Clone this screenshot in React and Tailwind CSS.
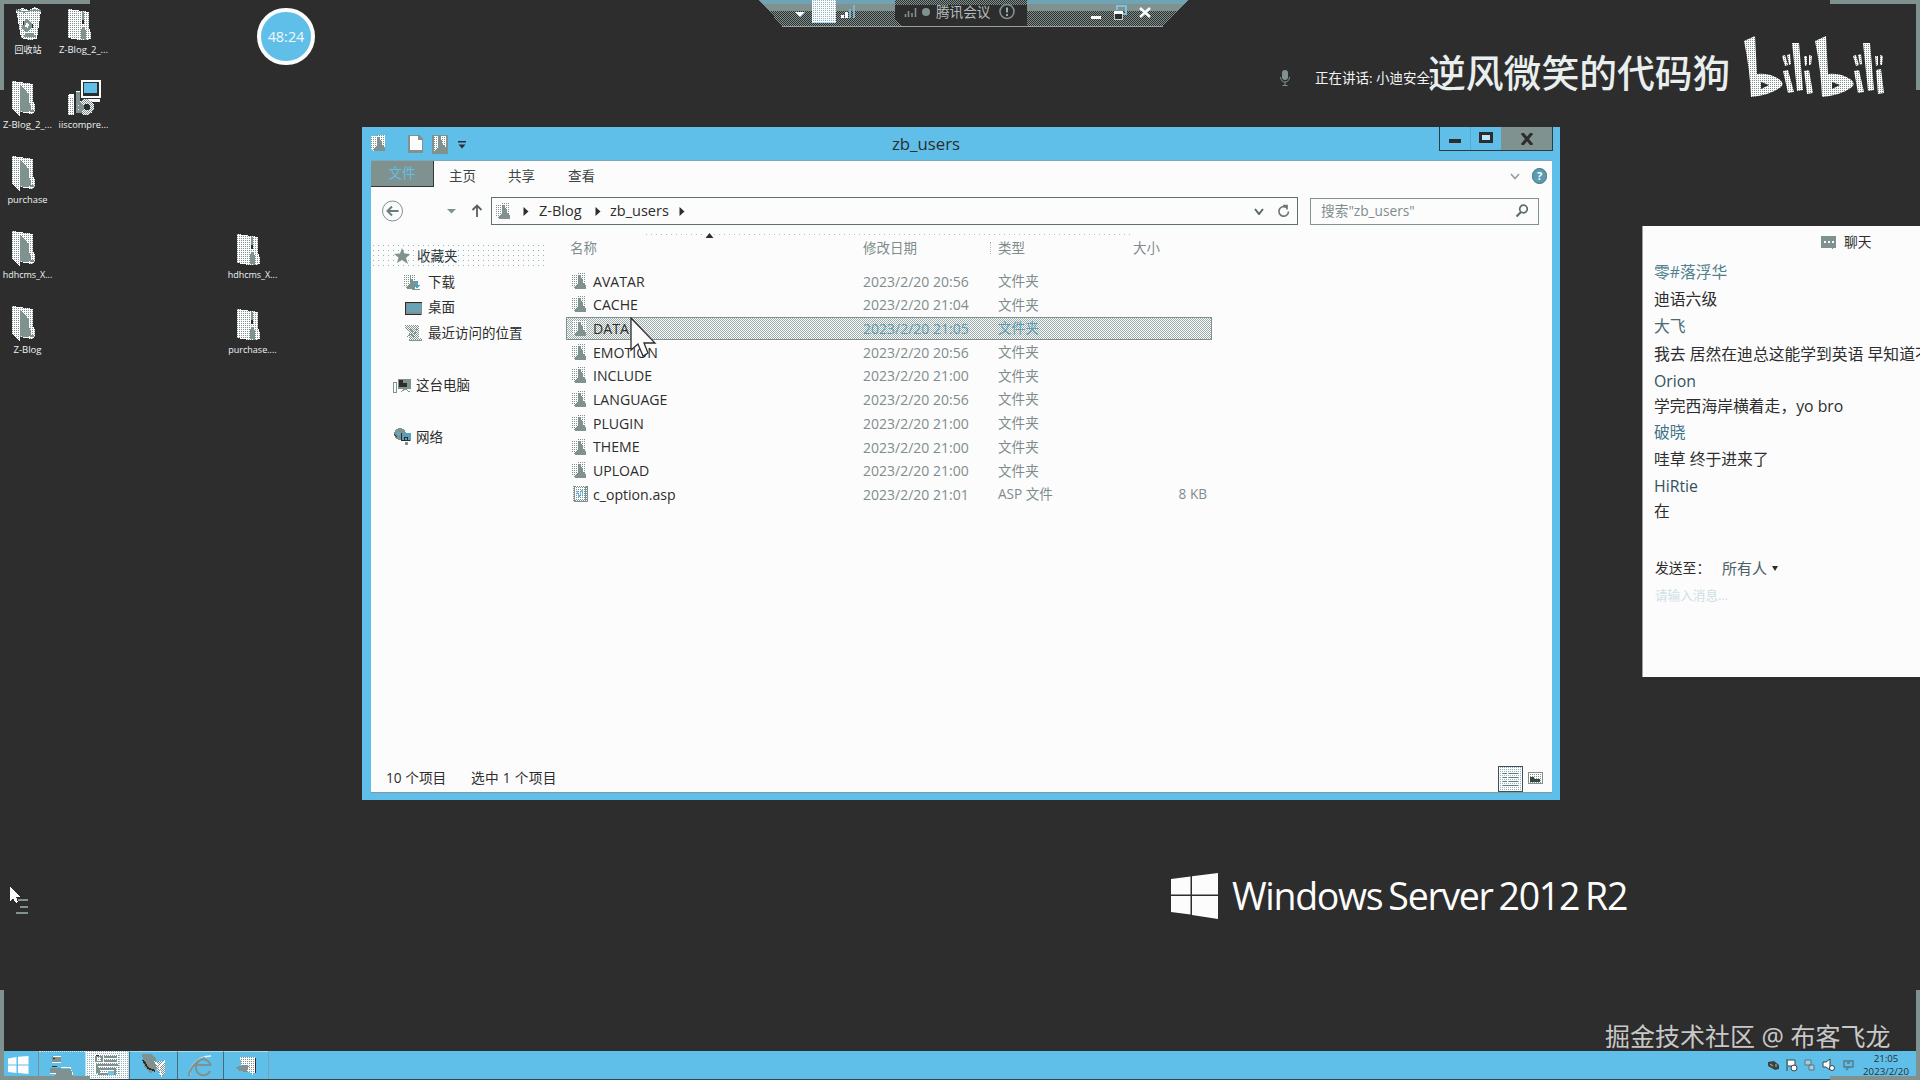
import React from "react";

const checker =
  "bg-[conic-gradient(#9aaba9_25%,#fcfcfc_0_50%,#9aaba9_0_75%,#fcfcfc_0)] bg-[length:2px_2px]";
const lightMesh =
  "bg-[conic-gradient(#8fb4be_25%,#fcfcfc_0)] bg-[length:2px_2px]";

function Defs() {
  return (
    <svg width="0" height="0" className="absolute" aria-hidden="true">
      <defs>
        <pattern id="mesh" width="2" height="2" patternUnits="userSpaceOnUse">
          <rect width="2" height="2" fill="#fcfcfc" />
          <rect width="1" height="1" fill="#7f9290" />
        </pattern>
        <pattern id="half" width="2" height="2" patternUnits="userSpaceOnUse">
          <rect width="2" height="2" fill="#fcfcfc" />
          <rect width="1" height="1" fill="#7f9290" />
          <rect x="1" y="1" width="1" height="1" fill="#7f9290" />
        </pattern>
        <pattern id="dusk" width="2" height="2" patternUnits="userSpaceOnUse">
          <rect width="2" height="2" fill="#2d2d2d" />
          <rect width="1" height="1" fill="#7f9290" />
          <rect x="1" y="1" width="1" height="1" fill="#7f9290" />
        </pattern>
      </defs>
    </svg>
  );
}

function BigFolder() {
  return (
    <svg width="24" height="35" viewBox="0 0 24 35" shapeRendering="crispEdges">
      <path d="M0 0L21 3V20L23 24V31L20 33L8 31V35L0 28Z" fill="url(#mesh)" />
      <path d="M8 4L13 8L17 14V21L19 26V30L14 31L8 30Z" fill="#7f9290" />
      <path d="M18 29h4v2h-4z" fill="#7f9290" />
    </svg>
  );
}

function ZipFolder() {
  return (
    <svg width="24" height="32" viewBox="0 0 24 32" shapeRendering="crispEdges">
      <path d="M0 0L14 2L21 3V18L23 24V30L19 31L12 31L0 29Z" fill="url(#mesh)" />
      <path d="M14 3H16V12H14ZM13 21L16 17L18 22V31L13 30Z" fill="#7f9290" />
      <path d="M14 11H16V15H14Z" fill="#2d2d2d" />
      <path d="M17.500 4V17" stroke="#fff" />
    </svg>
  );
}

function RecycleBin() {
  return (
    <svg width="27" height="34" viewBox="0 0 27 34" shapeRendering="crispEdges">
      <path d="M1 3L7 1L14 3L20 0L26 3L22 32L14 33L6 31Z" fill="url(#mesh)" />
      <path d="M1 3L9 5L19 3L26 4" stroke="#7f9290" strokeWidth="1.5" fill="none" />
      <path d="M8 15l4-3 5 4v5l-5 4-5-3zM10 26h8l3 4H9z" fill="#7f9290" />
      <path d="M11 16l3 1-1 4-3-1z" fill="#fcfcfc" />
      <path d="M8 14v4M17 17v4" stroke="#2d2d2d" />
    </svg>
  );
}

function Installer() {
  return (
    <svg width="34" height="36" viewBox="0 0 34 36" shapeRendering="crispEdges">
      <rect x="14" y="1" width="18" height="16" fill="#2d2d2d" stroke="#fcfcfc" strokeWidth="1.5" />
      <rect x="16" y="3" width="13" height="10" fill="#5fbfe9" />
      <path d="M20 19H32V22H24Z" fill="#fcfcfc" />
      <path d="M0 15H6V35H0Z" fill="url(#mesh)" />
      <path d="M8 12H12V33H8Z" fill="#7f9290" />
      <path d="M1 14H6M8 11H12M1 16H6" stroke="#fcfcfc" />
      <circle cx="18" cy="27" r="8" fill="url(#half)" />
      <path d="M12 21L17 27L13 34L10 28Z" fill="#7f9290" />
      <circle cx="19" cy="27" r="3.2" fill="#2d2d2d" />
    </svg>
  );
}

function SmallFolder() {
  return (
    <svg className="shrink-0" width="16" height="17" viewBox="0 0 16 17" shapeRendering="crispEdges">
      <path d="M0 1H5L7 0H14V16H2L0 14Z" fill="url(#mesh)" />
      <path d="M7 2H9V5L11 7V10L14 12V16H3V13L6 10V5Z" fill="#7f9290" />
    </svg>
  );
}

function AspFile() {
  return (
    <svg className="shrink-0" width="17" height="18" viewBox="0 0 17 18" shapeRendering="crispEdges">
      <path d="M1 1H13L16 3V17H1Z" fill="url(#half)" />
      <path d="M3 3H12V15H3Z" fill="url(#mesh)" />
      <path d="M5 6l2 6 3-7 1 5" stroke="#5fbfe9" fill="none" />
      <path d="M2.500 1V16.500H15.500V2L13.500 1.500V15" stroke="#7f9290" fill="none" />
    </svg>
  );
}

const desktopItems = [
  { kind: "bin", label: "回收站", icon: "left-[15px] top-[7px]", text: "left-0 top-[42px] w-[56px] text-[9px]" },
  { kind: "zip", label: "Z-Blog_2_...", icon: "left-[68px] top-[9px]", text: "left-[53px] top-[42px] w-[61px] text-[9.500px]" },
  { kind: "folder", label: "Z-Blog_2_...", icon: "left-[12px] top-[81px]", text: "left-[-3px] top-[117px] w-[61px] text-[9.500px]" },
  { kind: "installer", label: "iiscompre...", icon: "left-[68px] top-[80px]", text: "left-[53px] top-[117px] w-[61px] text-[9.300px]" },
  { kind: "folder", label: "purchase", icon: "left-[12px] top-[156px]", text: "left-[-3px] top-[192px] w-[61px] text-[9.300px]" },
  { kind: "folder", label: "hdhcms_X...", icon: "left-[12px] top-[231px]", text: "left-[-3px] top-[267px] w-[61px] text-[9px]" },
  { kind: "folder", label: "Z-Blog", icon: "left-[12px] top-[306px]", text: "left-[-3px] top-[342px] w-[61px] text-[9.600px]" },
  { kind: "zip", label: "hdhcms_X...", icon: "left-[237px] top-[234px]", text: "left-[222px] top-[267px] w-[61px] text-[9px]" },
  { kind: "zip", label: "purchase....", icon: "left-[237px] top-[309px]", text: "left-[222px] top-[342px] w-[61px] text-[9px]" },
];

const kinds = { bin: RecycleBin, zip: ZipFolder, folder: BigFolder, installer: Installer };

function DesktopItem({ kind, label, icon, text }) {
  const Icon = kinds[kind];
  return (
    <div>
      <div className={`absolute ${icon}`}><Icon /></div>
      <div className={`absolute ${text} flex h-4 items-center justify-center whitespace-nowrap text-[#eef3f3]`}>{label}</div>
    </div>
  );
}

function ConnectionBar() {
  return (
    <div className="absolute left-[759px] top-0 h-[27px] w-[429px]">
      <svg className="absolute inset-0" width="429" height="27" shapeRendering="crispEdges">
        <path d="M0 0H429L404 26H23Z" fill="url(#dusk)" />
        <path d="M0 0H429L419 11H11Z" fill="#7f9290" />
        <path d="M0 0H429L425 4H4Z" fill="#70a4b4" />
        <path d="M136 0H268V26H143L136 20Z" fill="#2d2d2d" />
        <path d="M136 0H268V5H136Z" fill="url(#dusk)" />
        <path d="M23 26.500H404" stroke="#9aa09a" />
      </svg>
      <div className="relative flex h-6 items-center">
        <svg className="ml-9 shrink-0" width="10" height="24"><path d="M0 12H10L5 17Z" fill="#fcfcfc" /></svg>
        <div className={`ml-[7px] h-[23px] w-6 shrink-0 self-start border-b border-[#9fdcf5] ${lightMesh}`} />
        <svg className="ml-[5px] shrink-0" width="15" height="24" shapeRendering="crispEdges">
          <path d="M0 15h3v3H0zM4 12h3v6H4z" fill="#fcfcfc" />
          <path d="M8 9h2v9H8zM12 5h2v13h-2z" fill="#7fb4c4" />
        </svg>
        <svg className="ml-[48px] shrink-0" width="26" height="24">
          <path d="M1.500 14v3M4.500 11v6M8 13v4M11.500 8v9" stroke="#7f9290" strokeWidth="1.6" />
          <circle cx="22" cy="12" r="4" fill="#7f9290" />
        </svg>
        <span className="ml-[6px] whitespace-nowrap text-[13.6px] text-[#b4bebe]">腾讯会议</span>
        <svg className="ml-[8px] shrink-0" width="18" height="24">
          <circle cx="9" cy="11.500" r="7" fill="none" stroke="#7f9290" strokeWidth="1.6" />
          <path d="M9 7.500v5M9 14v2" stroke="#a9b4b4" strokeWidth="1.8" />
        </svg>
        <svg className="ml-[74px] shrink-0" width="61" height="24" shapeRendering="crispEdges">
          <path d="M1 16h10v3H1z" fill="#fcfcfc" />
          <path d="M27 10V6H36V14H33" fill="none" stroke="#7fc0da" strokeWidth="1.5" />
          <rect x="24.500" y="11.500" width="8" height="8" fill="#2d2d2d" stroke="#c7d0d0" />
          <path d="M24 11h9v3h-9z" fill="#fcfcfc" />
          <path d="M50 8L60 17M60 8L50 17" stroke="#fcfcfc" strokeWidth="2.6" shapeRendering="auto" />
        </svg>
      </div>
    </div>
  );
}

function BiliLogo() {
  return (
    <svg className="absolute left-[1744px] top-[36px]" width="142" height="62" viewBox="0 0 142 62" fill="url(#mesh)">
      <path fillRule="evenodd" d="M0 5L11 0L13 38Q26 37 35 43Q41 47 37 51Q27 59 7 61Q6 34 0 5ZM17 46V53L25 49Z" />
      <path d="M39 35L44 34L50 56L44 57ZM38 20L41 19L44 29L41 30ZM43 19L46 18L47 28L45 29Z" />
      <path d="M48 7L55 7L59 54L53 55Z" />
      <path d="M60 35L65 34L69 57L63 58ZM60 20L63 20L63 29L61 30ZM65 19L68 20L67 29L65 29Z" />
      <path fillRule="evenodd" d="M71 5L82 0L84 38Q97 37 106 43Q112 47 108 51Q98 59 78 61Q77 34 71 5ZM88 46V53L96 49Z" />
      <path d="M110 35L115 34L120 56L114 57ZM109 20L112 19L115 29L112 30ZM114 19L117 18L118 28L116 29Z" />
      <path d="M119 7L126 7L130 54L124 55Z" />
      <path d="M132 34L137 33L140 57L134 58ZM131 20L134 20L134 29L132 30ZM136 19L139 20L138 29L136 29Z" />
    </svg>
  );
}

const files = [
  ["AVATAR", "2023/2/20 20:56", "文件夹"],
  ["CACHE", "2023/2/20 21:04", "文件夹"],
  ["DATA", "2023/2/20 21:05", "文件夹"],
  ["EMOTION", "2023/2/20 20:56", "文件夹"],
  ["INCLUDE", "2023/2/20 21:00", "文件夹"],
  ["LANGUAGE", "2023/2/20 20:56", "文件夹"],
  ["PLUGIN", "2023/2/20 21:00", "文件夹"],
  ["THEME", "2023/2/20 21:00", "文件夹"],
  ["UPLOAD", "2023/2/20 21:00", "文件夹"],
  ["c_option.asp", "2023/2/20 21:01", "ASP 文件", "8 KB"],
];

function FileRow({ file, selected }) {
  const [name, date, type, size] = file;
  return (
    <div
      className={`flex h-[23.7px] w-[646px] items-center whitespace-nowrap border pl-[5px] text-[13.6px] ${
        selected ? `border-[#7f9290] ${checker}` : "border-transparent"
      }`}
    >
      {size ? <AspFile /> : <SmallFolder />}
      <span className={`${size ? "ml-[4px]" : "ml-[5px]"} w-[270px] text-[14.1px] text-[#2d2d2d]`}>{name}</span>
      <span className={`w-[135px] text-[14px] ${selected ? "text-[#5c9db4]" : "text-[#7f8c8c]"}`}>{date}</span>
      <span className={`flex-1 ${selected ? "text-[#5c9db4]" : "text-[#7f8c8c]"}`}>{type}</span>
      <span className="pr-[4px] text-[#7f8c8c]">{size}</span>
    </div>
  );
}

function Sidebar() {
  return (
    <div className="flex w-[176px] shrink-0 flex-col pt-3 text-[13.5px] text-[#2d2d2d]">
      <div className="flex h-[26px] items-center bg-[radial-gradient(#8fb4bc_0.6px,transparent_0.7px)] bg-[length:5px_5px] pl-[23px]">
        <svg width="17" height="16" viewBox="0 0 17 16"><path d="M8 0L10.500 5.500L16 6L12 10L14 16L8 12L3 15L4.500 9.500L0 6L6 5.500Z" fill="#7f9290" /></svg>
        <span className="ml-[6px] text-[#2d3a3a]">收藏夹</span>
      </div>
      <div className="flex h-[26px] items-center pl-[33px]">
        <svg width="18" height="18" viewBox="0 0 18 18" shapeRendering="crispEdges">
          <path d="M0 1H12V16H2L0 14Z" fill="url(#mesh)" />
          <path d="M6 2L8 7L11 9V16H3V13L6 11Z" fill="#7f9290" />
          <path d="M11 8h3v4h2l-3 4-4-4h2z" fill="#5a9fba" /><path d="M8 16h8v1H8z" fill="#7f9290" />
        </svg>
        <span className="ml-[6px]">下载</span>
      </div>
      <div className="flex h-[25px] items-center pl-[34px]">
        <svg width="18" height="16" viewBox="0 0 18 16" shapeRendering="crispEdges">
          <path d="M0 2H17V15H0Z" fill="#7f9290" /><path d="M2 4H16V12H2Z" fill="#6ba3b6" />
          <path d="M0 2H17M0.500 2V15M0 14H16" stroke="#2d2d2d" />
        </svg>
        <span className="ml-[5px]">桌面</span>
      </div>
      <div className="flex h-[27px] items-center pl-[34px]">
        <svg width="18" height="17" viewBox="0 0 18 17" shapeRendering="crispEdges">
          <path d="M0 0H14V13H17V16H4V8L0 3Z" fill="url(#half)" />
          <path d="M2 12L6 9L8 12L12 4M4 15.500H17M3 3l5 4" stroke="#7f9290" fill="none" />
        </svg>
        <span className="ml-[5px] whitespace-nowrap">最近访问的位置</span>
      </div>
      <div className="mt-[25px] flex h-[26px] items-center pl-[22px]">
        <svg width="19" height="17" viewBox="0 0 19 17" shapeRendering="crispEdges">
          <path d="M5 2H18V12H5Z" fill="#7f9290" /><path d="M6 3H10V6H14V10H6Z" fill="#2d2d2d" />
          <path d="M0.500 5V15.500H3.500V5Z" fill="#fcfcfc" stroke="#7f9290" /><path d="M8 15l4-3 5 3" stroke="#7f9290" fill="none" />
        </svg>
        <span className="ml-[4px]">这台电脑</span>
      </div>
      <div className="mt-[26px] flex h-[26px] items-center pl-[22px]">
        <svg width="19" height="18" viewBox="0 0 19 18" shapeRendering="crispEdges">
          <circle cx="7" cy="6" r="6" fill="#7f9290" /><path d="M3 2l5 3-3 4z" fill="#62a9c5" />
          <path d="M8 5H18V13H8Z" fill="#5a9fba" /><path d="M1 6l3 3M8 5V12H17M11 9h3v3h-3z" stroke="#2d2d2d" fill="none" />
          <path d="M12 14h3v3h-3z" fill="#7f9290" />
        </svg>
        <span className="ml-[4px]">网络</span>
      </div>
    </div>
  );
}

function Explorer() {
  return (
    <div className="absolute left-[362px] top-[127px] flex h-[673px] w-[1198px] flex-col bg-[#5fbfe9] pb-[7px] pl-[9px] pr-[8px]">
      <div className="flex h-[33px] shrink-0 text-[#2d2d2d]">
        <div className="flex w-[110px] items-center">
          <SmallFolder />
          <svg className="ml-[21px] mt-[2px]" width="16" height="19" shapeRendering="crispEdges">
            <path d="M0 0H11L15 4V18H0Z" fill="#7f9290" /><path d="M2 1H10V5H14V15H2Z" fill="#fcfcfc" />
          </svg>
          <svg className="ml-[8px] mt-[2px]" width="16" height="19" shapeRendering="crispEdges">
            <path d="M0 0H16V19H0Z" fill="#7f9290" /><path d="M2 1H6V12L2 16ZM9 1H14V13L10 8Z" fill="url(#mesh)" />
          </svg>
          <svg className="ml-[10px] mt-[2px]" width="8" height="8"><path d="M0 0h8v1.500H0zM0.500 3.500h7L4 7.500z" fill="#2d2d2d" /></svg>
        </div>
        <div className="flex w-[890px] items-center justify-center text-[16.800px]">zb_users</div>
        <div className="ml-auto mr-[-1px] flex h-[24px] border border-t-0 border-[#2d3a40]">
          <div className="flex w-[31px] items-center justify-center border-r border-[#55a9cc]"><div className="mt-[5px] h-[4px] w-[12px] bg-[#2d2d2d]" /></div>
          <div className="flex w-[30px] items-center justify-center"><div className="mb-[2px] h-[11px] w-[14px] border-[3px] border-[#2d2d2d] bg-[#bfe6f7]" /></div>
          <div className="flex w-[51px] items-center justify-center bg-[#7f9290]">
            <svg width="14" height="12"><path d="M2 0L12 12M12 0L2 12" stroke="#2d2d2d" strokeWidth="3" /></svg>
          </div>
        </div>
      </div>
      <div className="flex min-h-0 flex-1 flex-col border-t border-[#7fa9b8] bg-[#fcfcfc]">
        <div className="flex h-[30px] shrink-0 items-center text-[13.5px] text-[#3c4646]">
          <div className="flex h-[26px] w-[63px] items-center justify-center self-start border-b border-r border-[#2d3a40] bg-[#7f9290] text-[#62bfe8]">文件</div>
          <span className="ml-[15px]">主页</span>
          <span className="ml-[32px]">共享</span>
          <span className="ml-[33px]">查看</span>
          <svg className="ml-auto" width="10" height="7"><path d="M1 1L5 5.500L9 1" fill="none" stroke="#8ea0a0" strokeWidth="1.6" /></svg>
          <div className="ml-[12px] mr-[5px] flex h-[16px] w-[15px] items-center justify-center rounded-full border border-[#4c6a76] bg-[#5b9bb4] text-[11px] font-bold text-white">?</div>
        </div>
        <div className="flex h-[40px] shrink-0 items-center text-[#2d2d2d]">
          <svg className="ml-[11px]" width="22" height="22">
            <circle cx="10.500" cy="11" r="10" fill="none" stroke="#7f9290" />
            <path d="M16.500 11H6M10 6.500L5.500 11L10 15.500" stroke="#6b7c7c" strokeWidth="2" fill="none" />
          </svg>
          <svg className="ml-[43px]" width="10" height="6"><path d="M0 1H9L4.500 5.500Z" fill="#7f9290" /></svg>
          <svg className="ml-[14px]" width="12" height="14"><path d="M6 13V2M1.500 6L6 1.500L10.500 6" stroke="#56605f" strokeWidth="1.8" fill="none" /></svg>
          <div className="ml-[8px] flex h-[28px] w-[807px] items-center border border-[#5f7070] bg-[#fcfcfc] text-[14.5px]">
            <div className="ml-[4px]"><SmallFolder /></div>
            <svg className="ml-[11px]" width="6" height="9"><path d="M0.500 0L5.500 4.500L0.500 9Z" fill="#2d2d2d" /></svg>
            <span className="ml-[10px] w-[44px]">Z-Blog</span>
            <svg className="ml-[12px]" width="6" height="9"><path d="M0.500 0L5.500 4.500L0.500 9Z" fill="#2d2d2d" /></svg>
            <span className="ml-[9px] w-[59px]">zb_users</span>
            <svg className="ml-[10px]" width="6" height="9"><path d="M0.500 0L5.500 4.500L0.500 9Z" fill="#2d2d2d" /></svg>
            <svg className="ml-auto" width="10" height="7"><path d="M1 1L5 6L9 1" fill="none" stroke="#5b6666" strokeWidth="2" /></svg>
            <svg className="ml-[13px] mr-[7px]" width="13" height="14"><path d="M9.500 3.500A4.800 4.800 0 1 0 11.500 7.500M6 1.500H10V5.500" fill="none" stroke="#6b7878" strokeWidth="1.7" /></svg>
          </div>
          <div className="ml-[12px] flex h-[27px] w-[229px] items-center border border-[#7f9290] text-[13.700px] text-[#7f8c8c]">
            <span className="ml-[10px] whitespace-nowrap">搜索"zb_users"</span>
            <svg className="ml-auto mr-[9px]" width="14" height="14"><circle cx="8.500" cy="5" r="3.800" fill="none" stroke="#5d6c6c" strokeWidth="1.7" /><path d="M6 8L1.500 12.500" stroke="#5d6c6c" strokeWidth="2.200" /></svg>
          </div>
        </div>
        <div className="flex min-h-0 flex-1">
          <Sidebar />
          <div className="ml-[19px] w-[646px]">
            <div className="flex h-[5px] items-start">
              <div className="ml-[80px] mt-[3px] h-px w-[59px] bg-[repeating-linear-gradient(90deg,#a9c4c8_0_1px,transparent_1px_5px)]" />
              <svg className="mt-[2px]" width="9" height="6"><path d="M4.500 0L8.500 5H0.500Z" fill="#2d2d2d" /></svg>
              <div className="mt-[3px] h-px w-[419px] bg-[repeating-linear-gradient(90deg,#a9c4c8_0_1px,transparent_1px_5px)]" />
            </div>
            <div className="flex h-[24px] items-center text-[13.500px] text-[#7f8c8c]">
              <span className="ml-[4px] w-[293px]">名称</span>
              <span className="w-[127px]">修改日期</span>
              <span className="h-[12px] w-[8px] border-l border-dotted border-[#a9b8b8]" />
              <span className="w-[135px]">类型</span>
              <span>大小</span>
            </div>
            <div className="mt-[9.400px]">
              {files.map((f, i) => <FileRow key={f[0]} file={f} selected={i === 2} />)}
            </div>
          </div>
        </div>
        <div className="flex h-[28px] shrink-0 items-center border-b border-[#7f9aa0] text-[13.700px] text-[#2d2d2d]">
          <span className="ml-[15px] w-[85px]">10 个项目</span>
          <span className="tracking-[0.3px]">选中 1 个项目</span>
          <div className={`ml-auto flex h-[26px] w-[25px] items-center justify-center border border-[#3f5058] ${lightMesh}`}>
            <svg width="17" height="16" shapeRendering="crispEdges"><path d="M1 2.500h4M7 2.500h9M1 6.500h4M7 6.500h9M1 10.500h4M7 10.500h9M1 14.500h15" stroke="#5f7c84" /></svg>
          </div>
          <svg className="ml-[5px] mr-[9px]" width="15" height="13" shapeRendering="crispEdges">
            <rect x="0.500" y="0.500" width="14" height="11" fill="url(#mesh)" stroke="#7f9290" /><path d="M2 5h4v2h6v3H2z" fill="#3b4444" />
          </svg>
        </div>
      </div>
    </div>
  );
}

const messages = [
  ["零#落浮华", "text-[#4f808f]", "h-[27px]"],
  ["迪语六级", "text-[#2d2d2d]", "h-[27px]"],
  ["大飞", "text-[#4a6a74]", "h-[28px]"],
  ["我去 居然在迪总这能学到英语 早知道不", "text-[#2d2d2d]", "h-[27px]"],
  ["Orion", "text-[#33525e]", "h-[27px]"],
  ["学完西海岸横着走，yo bro", "text-[#2d2d2d]", "h-[23px]"],
  ["破晓", "text-[#3f7388]", "h-[29px]"],
  ["哇草 终于进来了", "text-[#2d2d2d]", "h-[26px]"],
  ["HiRtie", "text-[#33525e]", "h-[28px]"],
  ["在", "text-[#2d2d2d]", "h-[22px]"],
];

function Chat() {
  return (
    <div className="absolute left-[1642px] top-[226px] flex h-[451px] w-[278px] flex-col overflow-hidden border-l border-[#9aa3a3] bg-[#fcfcfc] text-[#2d2d2d]">
      <div className="ml-[178px] flex h-[33px] shrink-0 items-center text-[13.8px]">
        <svg width="16" height="14" shapeRendering="crispEdges">
          <path d="M0 0H15V12H12V14L10 12H0Z" fill="#7f9290" /><path d="M3 5h2v2H3zM7 5h2v2H7zM11 5h2v2h-2z" fill="#fcfcfc" />
        </svg>
        <span className="ml-[7px]">聊天</span>
      </div>
      <div className="flex flex-col pl-[11px] text-[15.8px]">
        {messages.map(([t, color, h]) => (
          <div key={t} className={`flex ${h} items-center whitespace-nowrap ${color}`}>{t}</div>
        ))}
      </div>
      <div className="mt-[33px] flex h-[24px] shrink-0 items-center pl-[12px] text-[13.8px]">
        <span className="w-[67px]">发送至：</span>
        <span className="text-[15px] text-[#4b6068]">所有人</span>
        <svg className="ml-[5px]" width="6" height="5"><path d="M0 0H6L3 5Z" fill="#2d2d2d" /></svg>
      </div>
      <div className="mt-[6px] pl-[12px] text-[12.600px] leading-[20px] text-[#cfe0e5]">请输入消息...</div>
    </div>
  );
}

function ServerBrand() {
  return (
    <div className="absolute left-[1171px] top-[872px] flex h-[48px] items-center">
      <svg width="47" height="46" viewBox="0 0 47 46" fill="#fcfcfc">
        <path d="M0 6L19.500 3.500V21.500H0ZM21 3.300L47 0V21.500H21ZM0 23H19.500V41.500L0 39ZM21 23H47V46L21 42Z" />
      </svg>
      <span className="ml-[14px] whitespace-nowrap font-['Open_Sans'] text-[37.500px] font-normal tracking-[-1.300px] text-[#fcfcfc] [word-spacing:-2.500px]">Windows Server 2012 R2</span>
    </div>
  );
}

function Taskbar() {
  return (
    <div className="absolute left-0 top-[1051px] flex h-[29px] w-[1920px] items-center border-b border-[#33454d] bg-[#5fbfe9]">
      <div className="flex h-full w-[39px] items-center border-r border-[#77909a] pl-[8px]">
        <svg width="21" height="18" viewBox="0 0 21 18" fill="#fcfcfc"><path d="M0 2.500L8.500 1V8.500H0ZM10 0.800L20.500 0V8.500H10ZM0 9.500H8.500V17L0 16ZM10 9.500H20.500V18L10 17Z" /></svg>
      </div>
      <div className="flex h-full w-[46px] items-center justify-center border-t border-dotted border-[#d5eef8]">
        <svg width="26" height="24" shapeRendering="crispEdges">
          <path d="M3 2H12V8H3ZM1 14H12V19H1Z" fill="#7f9290" /><path d="M4 2.500H12M3 8.500H12M12 13h9l3 8M1 19.500h9" stroke="#fcfcfc" fill="none" />
          <path d="M8 15H22L24 23H6Z" fill="#7f9290" /><path d="M4 4h2M3 12h5" stroke="#2d2d2d" />
        </svg>
      </div>
      <div className={`flex h-full w-[44px] items-center justify-center border-x border-[#b5dfee] ${lightMesh}`}>
        <svg width="27" height="24" shapeRendering="crispEdges">
          <path d="M1 2H25V22H1Z" fill="url(#mesh)" /><path d="M2 3.500h6v5h-6zM10 4h13M10 8h13M2 12h22M5 16h16v5H5zM3 12v8" stroke="#7f9290" strokeWidth="1.5" fill="none" />
          <path d="M14 18h6v4h-6z" fill="#6fc3e6" /><path d="M2 2.500h3" stroke="#2d2d2d" />
        </svg>
      </div>
      <div className="flex h-full w-[49px] items-center justify-center border-x border-t border-[#4b6a76] border-t-[#a9dcf1]">
        <svg width="26" height="24" shapeRendering="crispEdges">
          <path d="M1 0H11L15 5V16L10 19L3 13Z" fill="#7f9290" /><path d="M2 6l5 8 7 3" stroke="#2d2d2d" strokeWidth="1.800" fill="none" />
          <path d="M14 8l10-2v13l-4 4-5-10z" fill="url(#half)" /><path d="M13 7l5 6 6-6M18 13l3 10" stroke="#fcfcfc" fill="none" />
        </svg>
      </div>
      <div className="flex h-full w-[46px] items-center justify-center border-r border-t border-[#4b6a76] border-t-[#a9dcf1]">
        <svg width="26" height="24">
          <path d="M22 17A7.500 8 0 1 1 22.500 11H9" fill="none" stroke="#7f9290" strokeWidth="2" /><path d="M2 21C0 15 9 2 23 2" fill="none" stroke="#e6f3f8" strokeWidth="1.500" />
          <path d="M1 22C1 15 9 5 17 4" fill="none" stroke="#7f9290" strokeWidth="2" />
        </svg>
      </div>
      <div className="flex h-full w-[45px] items-center justify-center border-r border-t border-[#71a4b6] border-t-[#a9dcf1]">
        <svg width="22" height="22" shapeRendering="crispEdges">
          <path d="M5 2H20V18L17 20L14 17H8Z" fill="url(#mesh)" /><path d="M1 12l8-2 5 1-2 6-8-1z" fill="#7f9290" /><path d="M20.500 3V18" stroke="#2d2d2d" />
        </svg>
      </div>
      <div className="ml-auto flex h-full items-center">
        <svg width="90" height="14">
          <path d="M1 4l6-1 5 4v4l-4 1-7-4z" fill="#3b4444" /><path d="M3 6l3 2M9 6v3" stroke="#c6b98f" />
          <path d="M20 1v12M21 2h7v6h-7" stroke="#3b4444" fill="#fcfcfc" /><circle cx="27" cy="10" r="3" fill="#fcfcfc" stroke="#3b4444" />
          <path d="M38 2h6v5h-6zM42 7h5v5h-5z" fill="#a9cdd9" stroke="#5a7883" />
          <path d="M56 4h3l4-3v11l-4-3h-3z" fill="#fcfcfc" stroke="#3b4444" /><circle cx="65" cy="10" r="2.500" fill="#fcfcfc" stroke="#3b4444" />
          <path d="M77 3h9v6h-9zM79 12l3-3M80 5h3" fill="none" stroke="#5a7883" strokeWidth="1.400" />
        </svg>
        <div className="ml-[6px] mr-[11px] flex w-[46px] flex-col items-center whitespace-nowrap text-[9.700px] leading-[13px] text-[#2d2d2d]">
          <span>21:05</span>
          <span>2023/2/20</span>
        </div>
      </div>
    </div>
  );
}

const brackets = [
  "left-0 top-0 h-1 w-[90px]",
  "left-0 top-0 h-[90px] w-1",
  "right-0 top-0 h-1 w-[90px]",
  "right-0 top-0 h-[90px] w-1",
  "left-0 bottom-0 h-1 w-[90px]",
  "left-0 bottom-0 h-[90px] w-1",
  "right-0 bottom-0 h-1 w-[90px]",
  "right-0 bottom-0 h-[90px] w-1",
];

export default function App() {
  return (
    <div className="relative h-[1080px] w-[1920px] overflow-hidden bg-[#2d2d2d] font-['Open_Sans','Noto_Sans_CJK_SC',sans-serif]">
      <Defs />
      {desktopItems.map((d) => <DesktopItem key={d.icon} {...d} />)}
      <div className="absolute left-[257px] top-[8px] flex h-[57px] w-[58px] items-center justify-center rounded-full border-4 border-[#fcfcfc] bg-[#5fbfe9] text-[14.400px] text-[#f0f8fb]">48:24</div>
      <ConnectionBar />
      <div className="absolute left-[1279px] top-[68px] flex h-[20px] items-center whitespace-nowrap text-[13.500px] text-[#f2f4f4]">
        <svg width="12" height="18"><rect x="3" y="1" width="6" height="10" rx="3" fill="#7f9290" /><path d="M1.500 8Q2 13 6 13T10.500 8M6 13V16M3.500 16.500H8.500" stroke="#7f9290" fill="none" /></svg>
        <span className="ml-[24px]">正在讲话: 小迪安全;</span>
      </div>
      <div className="absolute left-[1428px] top-[48px] flex h-[50px] items-center whitespace-nowrap text-[37.800px] font-medium text-[#e9eeee]">逆风微笑的代码狗</div>
      <BiliLogo />
      <Explorer />
      <svg className="absolute left-[630px] top-[317px]" width="28" height="44">
        <path d="M1 1V33L8 27L13 39L18 36L14 26H25Z" fill="#fcfcfc" stroke="#2d2d2d" strokeWidth="1.300" />
      </svg>
      <Chat />
      <ServerBrand />
      <svg className="absolute left-[10px] top-[886px]" width="20" height="30" shapeRendering="crispEdges">
        <path d="M8 13.500H18M10 20.500H18M6 26.500H18" stroke="#7f9290" strokeWidth="2" />
        <path d="M0 1V15L3 12L6 17L8 16L6 11H10Z" fill="#fcfcfc" />
      </svg>
      <Taskbar />
      {brackets.map((b) => <div key={b} className={`absolute ${b} bg-[#7f9290]`} />)}
      <div className="absolute left-[1605px] top-[1019px] flex h-[36px] items-center whitespace-nowrap text-[25px] text-[#c8c8c8] [text-shadow:1px_1px_1px_#2d2d2d]">掘金技术社区 @ 布客飞龙</div>
    </div>
  );
}
